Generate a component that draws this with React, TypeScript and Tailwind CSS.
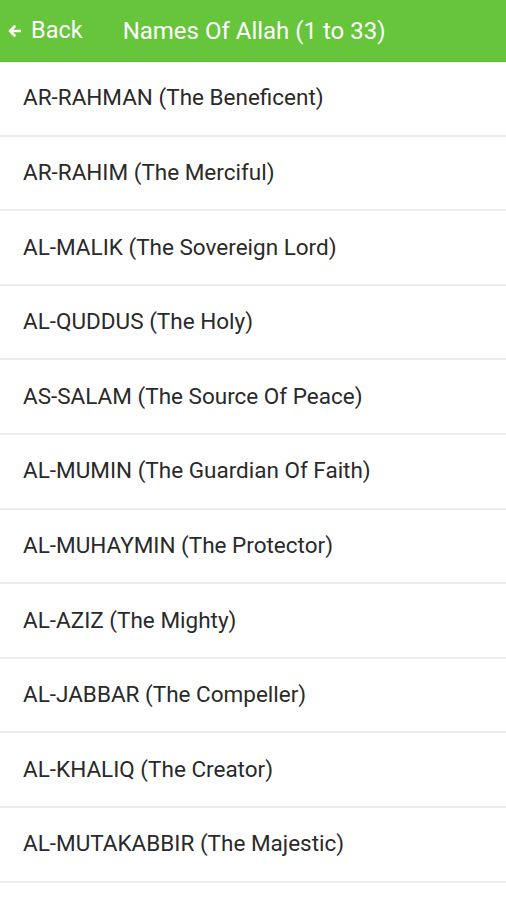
import React from 'react';

const names = [
  'AR-RAHMAN (The Beneficent)',
  'AR-RAHIM (The Merciful)',
  'AL-MALIK (The Sovereign Lord)',
  'AL-QUDDUS (The Holy)',
  'AS-SALAM (The Source Of Peace)',
  'AL-MUMIN (The Guardian Of Faith)',
  'AL-MUHAYMIN (The Protector)',
  'AL-AZIZ (The Mighty)',
  'AL-JABBAR (The Compeller)',
  'AL-KHALIQ (The Creator)',
  'AL-MUTAKABBIR (The Majestic)',
];

const App: React.FC = () => {
  return (
    <div className="h-[900px] overflow-hidden bg-white font-['Roboto',sans-serif]">
      <header className="h-[62px] bg-[#66c53a] text-white flex items-center border-b border-[#5cb832]">
        <button className="flex items-center pl-[8px] text-[23.5px] leading-none">
          <svg width="13" height="12" viewBox="0 0 13 12" className="mr-[10px]" fill="none" stroke="white" strokeWidth="2.6" strokeLinecap="round" strokeLinejoin="round">
            <path d="M12 6H2M6.5 1.5L2 6l4.5 4.5" />
          </svg>
          Back
        </button>
        <h1 className="ml-[40px] text-[24px] font-normal">Names Of Allah (1 to 33)</h1>
      </header>
      <ul>
        {names.map((n) => (
          <li key={n} className="h-[74.6px] flex items-center pl-[23px] border-b-2 border-[#ececec] text-[22.5px] text-[#2a2a2a]">
            {n}
          </li>
        ))}
      </ul>
    </div>
  );
};

export default App;
